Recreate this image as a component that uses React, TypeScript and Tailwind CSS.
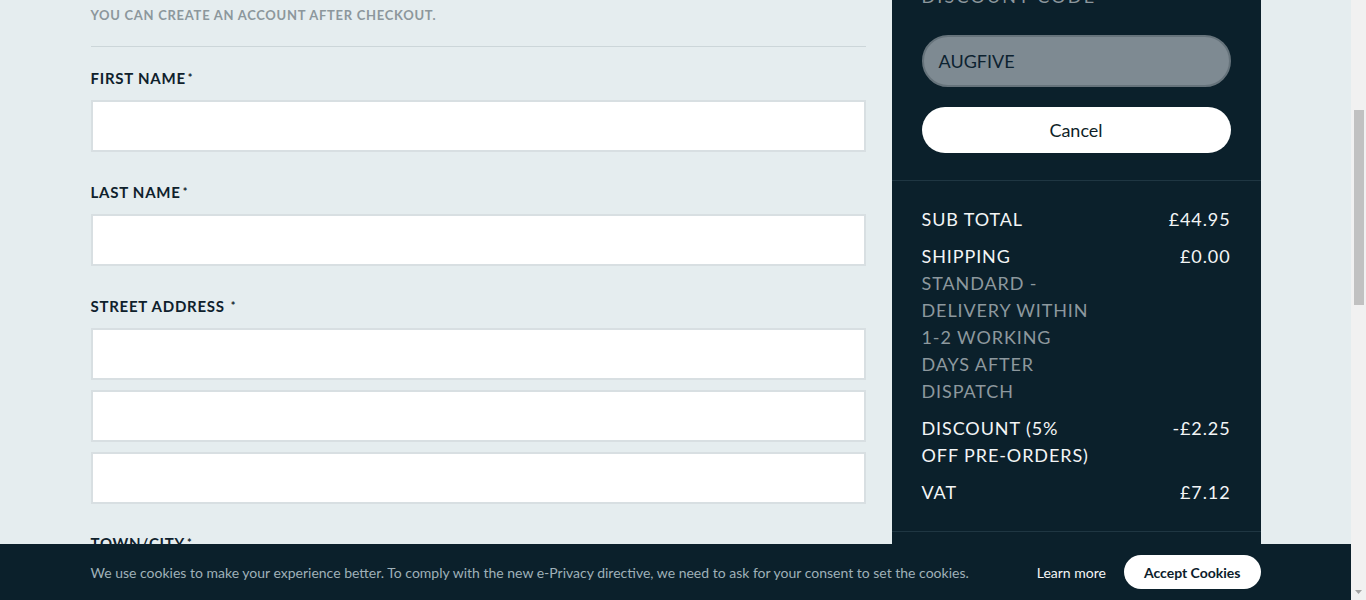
const font = { fontFamily: "Lato, 'Open Sans', sans-serif" };

function Label({ text, spaced }: { text: string; spaced?: boolean }) {
  return (
    <p className="text-[15px] font-bold uppercase leading-[18px] tracking-[0.05em] text-[#0f212c]">
      {text}
      <span className={`${spaced ? "ml-[6px]" : "ml-[2px]"} align-top text-[11px]`}>*</span>
    </p>
  );
}

function Field() {
  return <div className="h-[52px] w-full border-2 border-[#d8dfe2] bg-white" />;
}

const rows: { label: string; value: string; note?: string[] }[] = [
  { label: "SUB TOTAL", value: "£44.95" },
  {
    label: "SHIPPING",
    value: "£0.00",
    note: ["STANDARD -", "DELIVERY WITHIN", "1-2 WORKING", "DAYS AFTER", "DISPATCH"],
  },
  { label: "DISCOUNT (5% OFF PRE-ORDERS)", value: "-£2.25" },
  { label: "VAT", value: "£7.12" },
];

export default function App() {
  return (
    <div style={font} className="flex h-screen overflow-hidden bg-[#e5edef]">
      <main className="relative flex-1 overflow-hidden">
        <div className="mx-auto flex h-full w-[1170px] items-start gap-[26px]">
          {/* checkout form */}
          <section className="w-[775px]">
            <p className="mt-[6px] text-[13px] font-bold uppercase leading-[18px] tracking-[0.055em] text-[#8c979c]">
              You can create an account after checkout.
            </p>
            <hr className="mt-[22px] border-t border-[#ccd6d9]" />

            <div className="mt-[22px]">
              <Label text="First name" />
              <div className="mt-[13px]">
                <Field />
              </div>
            </div>
            <div className="mt-[31px]">
              <Label text="Last name" />
              <div className="mt-[13px]">
                <Field />
              </div>
            </div>
            <div className="mt-[31px]">
              <Label text="Street address" spaced />
              <div className="mt-[13px] flex flex-col gap-[10px]">
                <Field />
                <Field />
                <Field />
              </div>
            </div>
            <div className="mt-[30px]">
              <Label text="Town/City" />
              <div className="mt-[13px]">
                <Field />
              </div>
            </div>
          </section>

          {/* order summary */}
          <aside className="h-full w-[369px] bg-[#0b202b]">
            <div className="px-[30px]">
              <div className="-mt-[17px] flex h-[27px] items-center justify-between text-[18px] uppercase tracking-[0.12em] text-[#8c979d]">
                <span>Discount code</span>
                <span className="mr-[4px] text-[14px]">—</span>
              </div>
              <div className="mt-[25px] flex h-[52px] items-center rounded-full border-2 border-[#66737b] bg-[#7e8a92] px-[15px] text-[18px] text-[#0d2230]">
                AUGFIVE
              </div>
              <button className="mt-[20px] flex h-[46px] w-full items-center justify-center rounded-full bg-white text-[18px] text-[#0f1f28]">
                Cancel
              </button>
            </div>
            <div className="mt-[27px] border-t border-[#1f3642]" />
            <div className="flex flex-col gap-[10px] px-[30px] pb-[25px] pt-[25px] text-[18px] leading-[27px] tracking-[0.05em]">
              {rows.map((r) => (
                <div key={r.label} className="flex items-start justify-between">
                  <div className="w-[178px]">
                    <p className="text-[#f3f5f6]">{r.label}</p>
                    {r.note && (
                      <p className="text-[#8d989e]">
                        {r.note.map((n) => (
                          <span key={n} className="block">
                            {n}
                          </span>
                        ))}
                      </p>
                    )}
                  </div>
                  <p className="text-[#f3f5f6]">{r.value}</p>
                </div>
              ))}
            </div>
            <div className="border-t border-[#1f3642]" />
            <div className="flex justify-between px-[30px] pt-[25px] text-[18px] tracking-[0.05em] text-white">
              <span>TOTAL</span>
              <span>£42.70</span>
            </div>
          </aside>
        </div>

        {/* cookie notice */}
        <div className="absolute bottom-0 left-0 right-0 h-[56px] bg-[#0b202b]">
          <div className="mx-auto flex h-full w-[1170px] items-center">
            <p className="flex-1 text-[14px] text-[#9fb0b8]">
              We use cookies to make your experience better. To comply with the new e-Privacy directive, we need to ask
              for your consent to set the cookies.
            </p>
            <a className="text-[14px] text-[#f3f5f6]">Learn more</a>
            <button className="ml-[18px] h-[34px] rounded-full bg-white px-[20px] text-[14px] font-bold text-[#0b202b]">
              Accept Cookies
            </button>
          </div>
        </div>
      </main>

      {/* scrollbar */}
      <div className="flex w-[15px] flex-col bg-[#f1f1f1]">
        <div className="h-[110px]" />
        <div className="mx-auto h-[195px] w-[10px] bg-[#c1c1c1]" />
        <div className="flex-1" />
        <div className="flex h-[17px] items-center justify-center">
          <svg width="7" height="4" viewBox="0 0 7 4">
            <path d="M0 0h7L3.5 4z" fill="#a3a3a3" />
          </svg>
        </div>
      </div>
    </div>
  );
}
